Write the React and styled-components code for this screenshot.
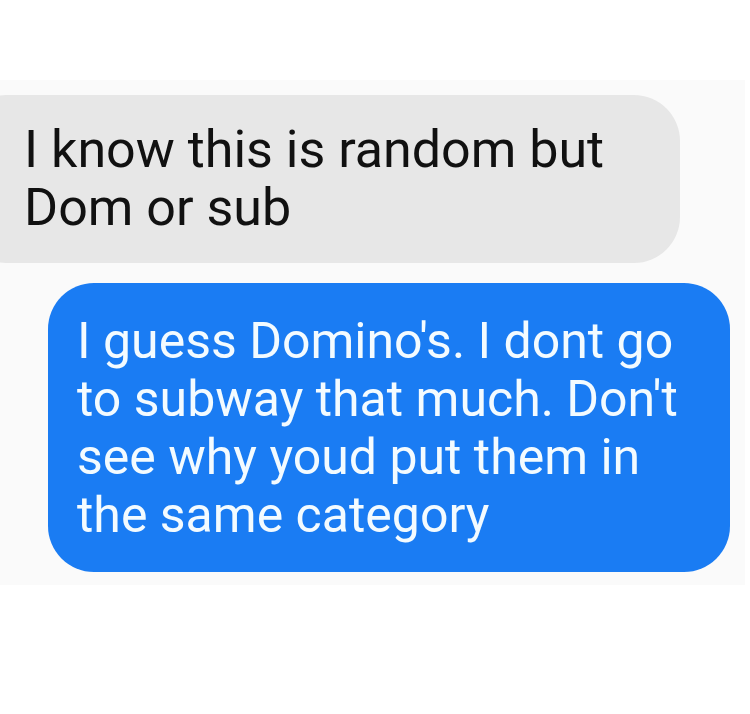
import React from "react";
import styled, { createGlobalStyle } from "styled-components";

const GlobalStyle = createGlobalStyle`
  html, body {
    margin: 0;
    padding: 0;
    background: #ffffff;
  }
  body {
    width: 750px;
    height: 714px;
    overflow: hidden;
    font-family: Roboto, "Noto Sans", sans-serif;
  }
`;

const Page = styled.div`
  padding-top: 80px;
`;

const Screen = styled.div`
  width: 745px;
  background: #fafafa;
  padding: 15px 0 13px;
  display: flex;
  flex-direction: column;
  gap: 20px;
  overflow: hidden;
`;

const Bubble = styled.div`
  box-sizing: border-box;
  border-radius: 46px;
  font-size: ${(p) => p.size}px;
  line-height: 58px;
  background: ${(p) => (p.sent ? "#1a7cf3" : "#e7e7e7")};
  color: ${(p) => (p.sent ? "#f3fbff" : "#111111")};
  ${(p) =>
    p.sent
      ? `
    align-self: flex-end;
    margin-right: 15px;
    width: 682px;
    padding: 29px 20px 28px 29px;
  `
      : `
    margin-left: -40px;
    width: 720px;
    padding: 26px 20px 26px 64px;
  `}
`;

const Line = styled.span`
  display: block;
  white-space: nowrap;
`;

const received = ["I know this is random but", "Dom or sub"];
const sent = [
  "I guess Domino's. I dont go",
  "to subway that much. Don't",
  "see why youd put them in",
  "the same category",
];

const App = () => {
  return (
    <Page>
      <GlobalStyle />
      <Screen>
        <Bubble size={52}>
          {received.map((line) => (
            <Line key={line}>{line}</Line>
          ))}
        </Bubble>
        <Bubble sent size={50}>
          {sent.map((line) => (
            <Line key={line}>{line}</Line>
          ))}
        </Bubble>
      </Screen>
    </Page>
  );
};

export default App;
